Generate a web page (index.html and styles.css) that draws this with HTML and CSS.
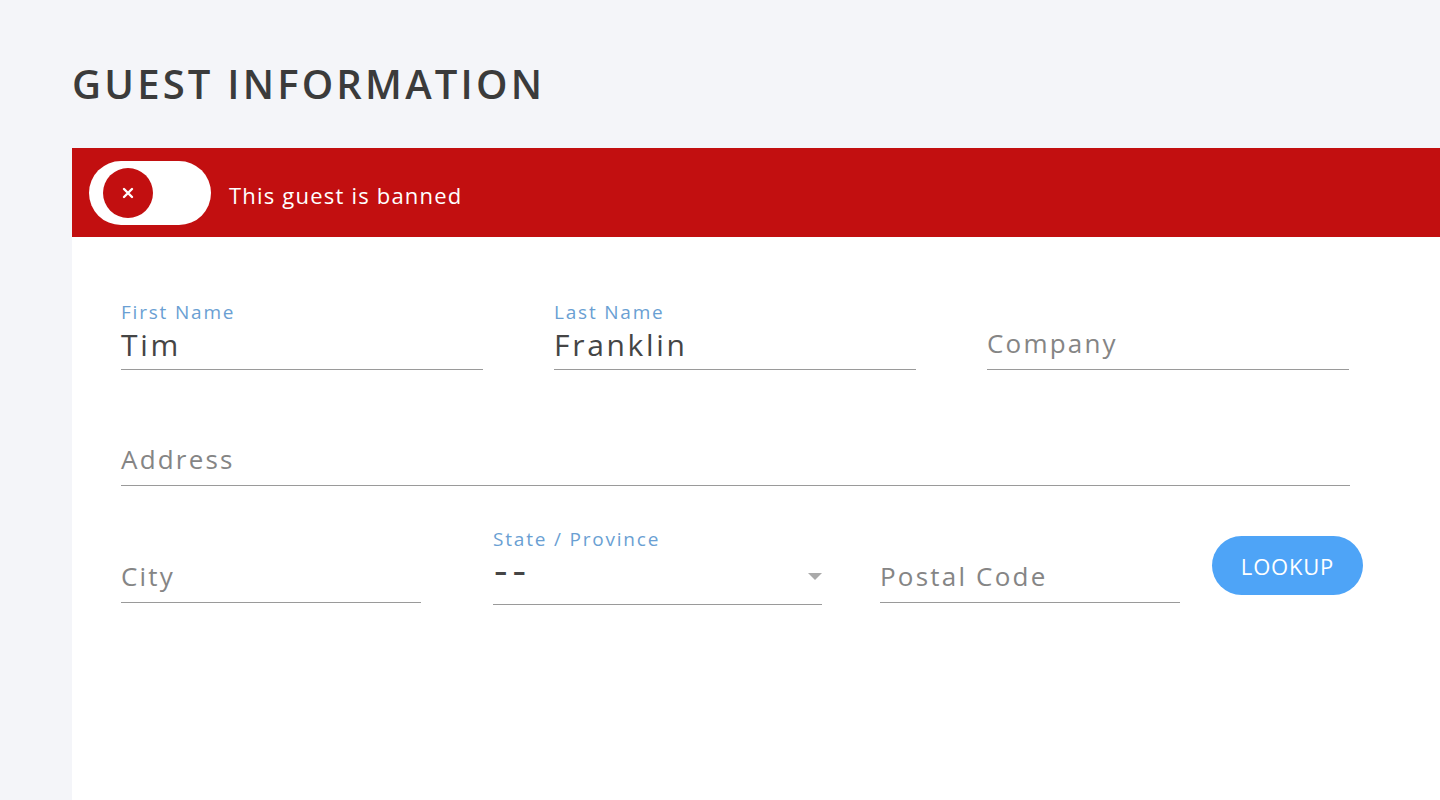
FILE: index.html
```html
<!DOCTYPE html>
<html lang="en">
<head>
<meta charset="utf-8">
<title>Guest Information</title>
<link rel="stylesheet" href="styles.css">
</head>
<body>
<main class="page">
  <h1 class="title">GUEST INFORMATION</h1>
  <section class="card">
    <div class="banner">
      <div class="toggle">
        <span class="knob">
          <svg width="12" height="12" viewBox="0 0 12 12"><path d="M2 2 L10 10 M10 2 L2 10" stroke="#fff" stroke-width="2.4" stroke-linecap="round"/></svg>
        </span>
      </div>
      <span class="banner-text">This guest is banned</span>
    </div>
    <div class="form">
      <div class="row row-3">
        <div class="field">
          <div class="label">First Name</div>
          <div class="control value">Tim</div>
        </div>
        <div class="field">
          <div class="label">Last Name</div>
          <div class="control value">Franklin</div>
        </div>
        <div class="field">
          <div class="label"></div>
          <div class="control placeholder">Company</div>
        </div>
      </div>
      <div class="row row-street">
        <div class="field wide">
          <div class="label"></div>
          <div class="control placeholder">Address</div>
        </div>
      </div>
      <div class="row row-addr">
        <div class="field city">
          <div class="label"></div>
          <div class="control placeholder">City</div>
        </div>
        <div class="field state">
          <div class="label">State / Province</div>
          <div class="control value select">
            <span class="dashes">--</span>
            <span class="caret"></span>
          </div>
        </div>
        <div class="field postal">
          <div class="label"></div>
          <div class="control placeholder">Postal Code</div>
        </div>
        <button class="lookup" type="button">LOOKUP</button>
      </div>
    </div>
  </section>
</main>
</body>
</html>
```

FILE: styles.css
```css
html, body {
  margin: 0;
  padding: 0;
  background: #f4f5f9;
  font-family: "Open Sans", "Noto Sans", sans-serif;
}

.page {
  padding: 60px 0 0 72px;
  min-height: 800px;
  box-sizing: border-box;
  display: flex;
  flex-direction: column;
}

.title {
  margin: 0 0 40px;
  font-size: 40px;
  line-height: 48px;
  font-weight: 600;
  letter-spacing: 3.2px;
  color: #3b3b3b;
}

.card {
  background: #ffffff;
  flex: 1;
  display: flex;
  flex-direction: column;
}

.banner {
  height: 89px;
  background: #c20f10;
  display: flex;
  align-items: center;
  padding-left: 17px;
}

.toggle {
  width: 122px;
  height: 64px;
  border-radius: 32px;
  background: #ffffff;
  display: flex;
  align-items: center;
  padding-left: 14px;
  box-sizing: border-box;
}

.knob {
  width: 50px;
  height: 50px;
  border-radius: 50%;
  background: #c20f10;
  display: flex;
  align-items: center;
  justify-content: center;
}

.banner-text {
  margin-left: 18px;
  padding-top: 5px;
  color: #ffffff;
  font-size: 22px;
  letter-spacing: 1.2px;
}

.form {
  padding: 64px 0 0 49px;
}

.row {
  display: flex;
  align-items: flex-end;
  margin-bottom: 47px;
}
.row > * {
  flex-shrink: 0;
}
.row-street {
  margin-bottom: 42px;
}

.row-3 .field {
  width: 362px;
}
.row-3 .field + .field {
  margin-left: 71px;
}

.field {
  display: flex;
  flex-direction: column;
}
.field.wide {
  width: 1229px;
}

.label {
  height: 22px;
  font-size: 19px;
  line-height: 22px;
  color: #6a9fd3;
  letter-spacing: 1.8px;
  font-weight: 500;
}

.control {
  height: 47px;
  box-sizing: border-box;
  padding-top: 7px;
  line-height: 1;
  border-bottom: 1px solid #9a9a9a;
  white-space: nowrap;
}

.value {
  font-size: 30px;
  color: #454545;
  letter-spacing: 2.7px;
}

.placeholder {
  font-size: 26px;
  color: #858585;
  letter-spacing: 2.2px;
}

.city {
  width: 300px;
}
.state {
  width: 329px;
  margin-left: 72px;
  margin-bottom: -2px;
}
.postal {
  width: 300px;
  margin-left: 58px;
}

.select {
  height: 55px;
  padding-top: 6px;
  display: flex;
  justify-content: space-between;
  align-items: flex-start;
}

.dashes {
  display: inline-block;
  letter-spacing: 4px;
  padding-left: 1px;
  font-weight: 600;
  transform: scaleX(1.35);
  transform-origin: left center;
}

.caret {
  width: 0;
  height: 0;
  border-left: 7px solid transparent;
  border-right: 7px solid transparent;
  border-top: 7px solid #aaaaaa;
  margin: 17px 0 0 0;
}

.lookup {
  margin-left: 32px;
  margin-bottom: 8px;
  width: 151px;
  height: 59px;
  border: none;
  border-radius: 30px;
  background: #4ea4f7;
  color: #ffffff;
  font-family: "Open Sans", "Noto Sans", sans-serif;
  font-size: 22px;
  letter-spacing: 0.8px;
  padding: 0;
}
```
